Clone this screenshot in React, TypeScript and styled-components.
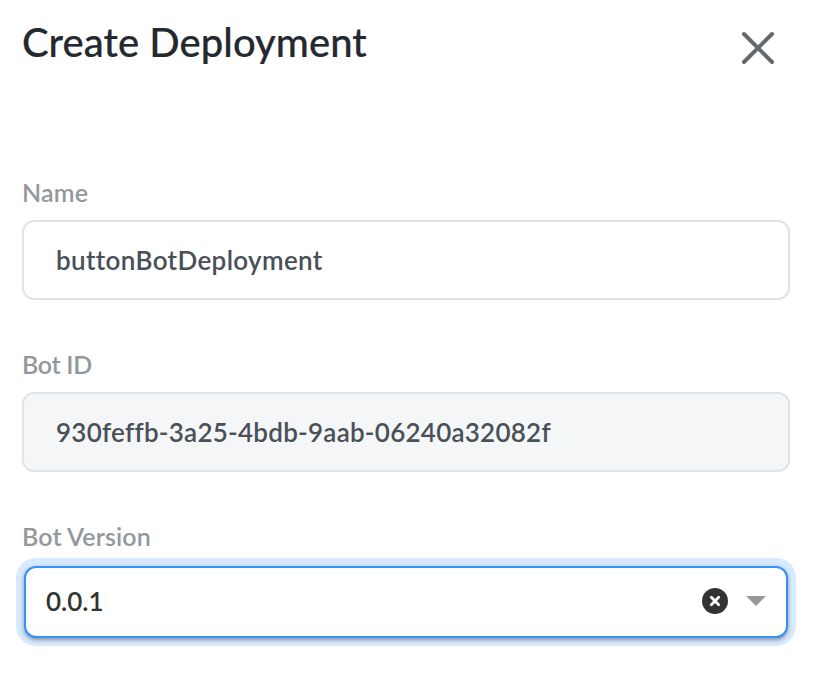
import React from "react";
import styled, { createGlobalStyle } from "styled-components";

const GlobalStyle = createGlobalStyle`
  *, *::before, *::after { box-sizing: border-box; }
  body { margin: 0; background: #fff; font-family: Lato, sans-serif; }
`;

const Panel = styled.main`
  width: 822px;
  height: 676px;
  padding: 15px 32px 0 22px;
  background: #fff;
  overflow: hidden;
`;

const Header = styled.header`
  display: flex;
  justify-content: space-between;
  align-items: flex-start;
  height: 159px;
`;

const Title = styled.h1`
  margin: 0;
  font-size: 40px;
  font-weight: 500;
  line-height: 54px;
  letter-spacing: 0.05px;
  color: #24292f;
  -webkit-text-stroke: 0.2px currentColor;
  white-space: nowrap;
`;

const CloseButton = styled.button`
  display: flex;
  margin: 16px 15px 0 0;
  padding: 0;
  border: 0;
  background: none;
  color: #65696b;
`;

const Form = styled.form`
  display: flex;
  flex-direction: column;
`;

const Field = styled.div`
  height: 172px;
`;

const Label = styled.label<{ $spacing?: number }>`
  display: block;
  height: 46px;
  font-size: 25px;
  font-weight: 600;
  line-height: 37px;
  letter-spacing: ${(p) => p.$spacing ?? 0}px;
  color: #92989c;
`;

const Box = styled.div<{ $muted?: boolean }>`
  display: flex;
  align-items: center;
  width: 768px;
  height: 80px;
  padding: 0 32px;
  border: 2px solid #e0e4e8;
  border-radius: 12px;
  background: ${(p) => (p.$muted ? "#f5f6f8" : "#fff")};
`;

const Value = styled.span<{ $spacing?: number }>`
  font-size: 26px;
  font-weight: 600;
  letter-spacing: ${(p) => p.$spacing ?? 0}px;
  color: #495057;
  white-space: nowrap;
`;

const SelectBox = styled.div`
  display: flex;
  align-items: center;
  width: 764px;
  height: 72px;
  margin: 2px 0 0 2px;
  padding: 0 20px 2px 20px;
  border: 2px solid #3390fc;
  border-radius: 12px;
  background: #fff;
  box-shadow: 0 2px 4px rgba(0, 0, 0, 0.38), 0 0 0 8px #d8eaff;
`;

const SelectValue = styled(Value)`
  flex: 1;
  padding-bottom: 1px;
  color: #333;
`;

const Arrow = styled.svg`
  margin-left: 18px;
`;

export default function App() {
  return (
    <>
      <GlobalStyle />
      <Panel>
        <Header>
          <Title>Create Deployment</Title>
          <CloseButton aria-label="Close">
            <svg width="34" height="34" viewBox="0 0 34 34">
              <path d="M3 3L31 31M31 3L3 31" stroke="currentColor" strokeWidth="4" strokeLinecap="round" />
            </svg>
          </CloseButton>
        </Header>
        <Form>
          <Field>
            <Label $spacing={0.2}>Name</Label>
            <Box><Value $spacing={0.36}>buttonBotDeployment</Value></Box>
          </Field>
          <Field>
            <Label $spacing={-0.3}>Bot ID</Label>
            <Box $muted><Value $spacing={0.25}>930feffb-3a25-4bdb-9aab-06240a32082f</Value></Box>
          </Field>
          <Field>
            <Label $spacing={0.1}>Bot Version</Label>
            <SelectBox>
              <SelectValue>0.0.1</SelectValue>
              <svg width="26" height="26" viewBox="0 0 26 26">
                <circle cx="13" cy="13" r="13" fill="#333" />
                <path d="M9.3 9.3L16.7 16.7M16.7 9.3L9.3 16.7" stroke="#fff" strokeWidth="2.8" strokeLinecap="round" />
              </svg>
              <Arrow width="20" height="10" viewBox="0 0 20 10">
                <path d="M0 0H20L10 10Z" fill="#999" />
              </Arrow>
            </SelectBox>
          </Field>
        </Form>
      </Panel>
    </>
  );
}
